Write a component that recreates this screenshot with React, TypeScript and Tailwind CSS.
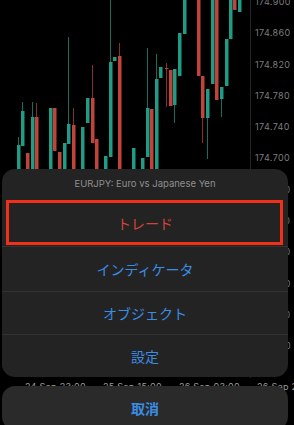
import React from 'react';

type Candle = { x: number; t: number; b: number; wt?: number; wb?: number; up: boolean };

// x = left edge, t/b = body top/bottom, wt/wb = wick ends
const candles: Candle[] = [
  { x: 17, t: 145, b: 200, wt: 137, up: true },
  { x: 21, t: 111, b: 146, wt: 102, up: true },
  { x: 26, t: 153, b: 200, up: false },
  { x: 31, t: 117, b: 200, wt: 102, up: true },
  { x: 35, t: 117, b: 200, wt: 103, up: false },
  { x: 49, t: 108, b: 200, up: true },
  { x: 53, t: 108, b: 151, up: false },
  { x: 58, t: 152, b: 200, up: false },
  { x: 63, t: 143, b: 200, up: true },
  { x: 67, t: 124, b: 144, wt: 37, up: true },
  { x: 72, t: 125, b: 200, wt: 108, up: false },
  { x: 81, t: 127, b: 200, up: true },
  { x: 86, t: 98, b: 123, up: true },
  { x: 91, t: 98, b: 143, wt: 65, up: false },
  { x: 95, t: 139, b: 200, up: false },
  { x: 104, t: 156, b: 200, up: true },
  { x: 109, t: 62, b: 157, wt: 0, up: true },
  { x: 113, t: 57, b: 61, up: true },
  { x: 118, t: 56, b: 200, wt: 43, up: false },
  { x: 132, t: 148, b: 200, up: true },
  { x: 141, t: 158, b: 200, up: true },
  { x: 146, t: 108, b: 157, wt: 48, up: true },
  { x: 150, t: 109, b: 200, up: false },
  { x: 155, t: 79, b: 200, wt: 54, up: true },
  { x: 159, t: 67, b: 78, up: true },
  { x: 165, t: 68, b: 69, wt: 63, wb: 107, up: false },
  { x: 169, t: 70, b: 106, up: false },
  { x: 173, t: 69, b: 105, wb: 123, up: true },
  { x: 178, t: 33, b: 76, up: true },
  { x: 183, t: 0, b: 34, up: true },
  { x: 197, t: 0, b: 76, up: false },
  { x: 201, t: 76, b: 118, wb: 143, up: false },
  { x: 206, t: 89, b: 118, wb: 159, up: true },
  { x: 211, t: 0, b: 84, up: true },
  { x: 215, t: 0, b: 100, up: false },
  { x: 220, t: 87, b: 99, wb: 117, up: true },
  { x: 225, t: 39, b: 86, up: true },
  { x: 229, t: 0, b: 39, up: true },
  { x: 233, t: 0, b: 10, up: false },
  { x: 238, t: 0, b: 12, up: true },
];

const prices = ['174.900', '174.860', '174.820', '174.780', '174.740', '174.700', '174.660', '174.620', '174.580', '174.540', '174.500', '174.460'];
const times = ['24 Sep 23:00', '25 Sep 15:00', '26 Sep 03:00', '26 Sep 23:00'];

function CandleChart() {
  return (
    <svg width="250" height="378" viewBox="0 0 250 378" className="block shrink-0">
      {candles.map((c, i) => {
        const color = c.up ? '#1f9c86' : '#c2433a';
        const cx = c.x + 1.5;
        return (
          <g key={i}>
            {(c.wt !== undefined || c.wb !== undefined) && (
              <line
                x1={cx}
                x2={cx}
                y1={c.wt ?? c.t}
                y2={c.wb ?? c.b}
                stroke={color}
                strokeOpacity={0.7}
                strokeWidth={1}
              />
            )}
            <rect x={c.x} y={c.t} width={3.5} height={Math.max(1, c.b - c.t)} fill={color} />
          </g>
        );
      })}
    </svg>
  );
}

export default function App() {
  return (
    <div
      className="relative w-[294px] h-[425px] overflow-hidden bg-black select-none"
      style={{ fontFamily: "Inter, 'Noto Sans CJK JP', sans-serif" }}
    >
      {/* ── Chart ── */}
      <div className="flex h-[378px]">
        <CandleChart />
        <div className="flex-1 min-w-0 border-l border-[#262626] pl-[4px] flex flex-col gap-[19.3px] -mt-[4px] text-[9px] leading-[12px] tracking-[0.04em] text-[#7c7c7c] whitespace-nowrap">
          {prices.map((p) => (
            <span key={p}>{p}</span>
          ))}
        </div>
      </div>
      <div className="flex gap-[17px] pl-[25px] mt-[3px] text-[9px] leading-[12px] tracking-[0.03em] text-[#9a9a9a] whitespace-nowrap">
        {times.map((t) => (
          <span key={t}>{t}</span>
        ))}
      </div>

      {/* ── Action sheet ── */}
      <div className="absolute left-[2px] top-[169px] w-[286px] flex flex-col gap-[9px]">
        <div className="rounded-[13px] bg-[#232323] overflow-hidden flex flex-col">
          <div className="h-[31px] flex items-center justify-center text-[9.5px] text-[#8f8f8f]">
            EURJPY: Euro vs Japanese Yen
          </div>
          <div className="relative h-[46px] flex items-center justify-center text-[14px] text-[#d5443a]">
            トレード
            <div className="absolute left-[4px] right-[5px] top-0 h-[45px] border-[3px] border-[#f2301a]" />
          </div>
          <div className="h-[45px] border-t border-[#323232] flex items-center justify-center text-[14px] text-[#3b8de4]">
            インディケータ
          </div>
          <div className="h-[43px] border-t border-[#323232] flex items-center justify-center text-[14px] text-[#3b8de4]">
            オブジェクト
          </div>
          <div className="h-[43px] border-t border-[#323232] flex items-center justify-center text-[14px] text-[#3b8de4]">
            設定
          </div>
        </div>
        <div className="h-[44px] rounded-[13px] bg-[#2a2a2a] flex items-center justify-center text-[14px] font-semibold text-[#3b8de4]">
          取消
        </div>
      </div>
    </div>
  );
}
